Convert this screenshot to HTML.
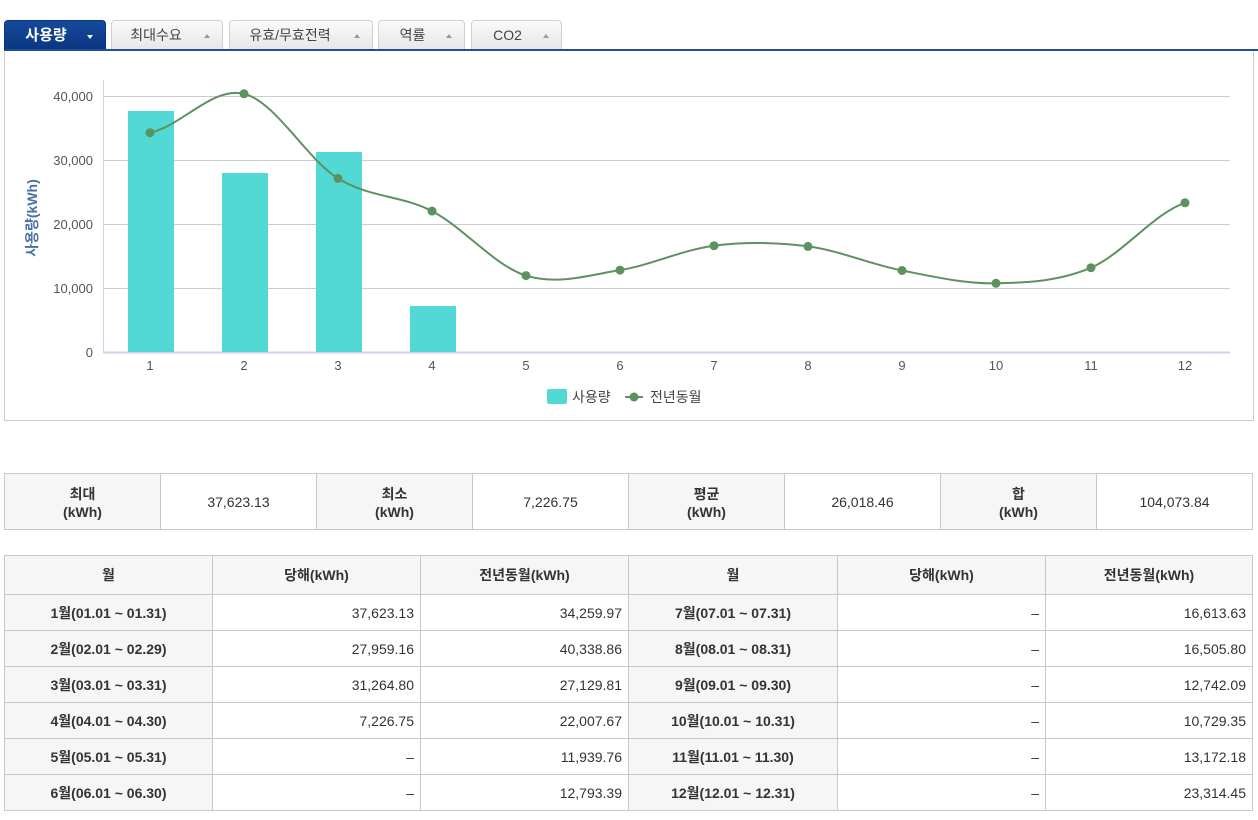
<!DOCTYPE html>
<html><head><meta charset="utf-8"><style>
body{margin:0;width:1258px;height:820px;background:#fff;font-family:"Liberation Sans","Noto Sans CJK KR",sans-serif;position:relative;overflow:hidden;color:#333}
.tab{position:absolute;top:20px;height:30px;box-sizing:border-box;border:1px solid #d0d0d0;border-bottom:none;border-radius:4px 4px 0 0;background:linear-gradient(#fafafa,#e6e6e6);font-size:14px;color:#444;line-height:29px}
.tab span.t{position:absolute;left:0;right:0;text-align:center}
.tab .a{position:absolute;right:12px;top:13px;width:0;height:0;border-left:3px solid transparent;border-right:3px solid transparent;border-bottom:4px solid #999}
.act{background:linear-gradient(#154a9c,#0a3680);border-color:#0a3680;color:#fff;font-weight:bold;font-size:15px}
.act .a{border-bottom:none;border-top:4px solid #fff;top:14px}
table{position:absolute;border-collapse:collapse;font-size:14px}
td{border:1px solid #c8c8c8;text-align:center;padding:0}
td.h{background:#f6f6f6;font-weight:bold;color:#333}
.m td{height:35px}
.m td.r{text-align:right;padding-right:6px}
.m tr:first-child td{height:38px}
</style></head><body>
<div class="tab act" style="left:4px;width:102px"><span class="t" style="right:18px">사용량</span><i class="a"></i></div>
<div class="tab" style="left:111px;width:112px"><span class="t" style="right:22px">최대수요</span><i class="a"></i></div>
<div class="tab" style="left:229px;width:144px"><span class="t" style="right:22px">유효/무효전력</span><i class="a"></i></div>
<div class="tab" style="left:378px;width:87px"><span class="t" style="right:18px">역률</span><i class="a"></i></div>
<div class="tab" style="left:471px;width:91px"><span class="t" style="right:18px">CO2</span><i class="a"></i></div>
<div style="position:absolute;left:4px;right:0;top:49px;height:2px;background:#1e4f9a"></div>
<div style="position:absolute;left:4px;top:52px;width:1250px;height:369px;box-sizing:border-box;border:1px solid #ccc;border-top:none"></div>
<svg style="position:absolute;left:0;top:0" width="1258" height="430" font-family="Liberation Sans,Noto Sans CJK KR,sans-serif">
<g stroke="#ccc" stroke-width="1">
<line x1="103" y1="96.5" x2="1230" y2="96.5"/><line x1="103" y1="160.5" x2="1230" y2="160.5"/><line x1="103" y1="224.5" x2="1230" y2="224.5"/><line x1="103" y1="288.5" x2="1230" y2="288.5"/>
</g>
<line x1="103.5" y1="80" x2="103.5" y2="352" stroke="#ccd6eb"/>
<line x1="103" y1="352.5" x2="1230" y2="352.5" stroke="#ccd6eb" stroke-width="2"/>
<g fill="#52d8d5">
<rect x="128" y="111" width="46" height="241"/><rect x="222" y="173" width="46" height="179"/><rect x="316" y="152" width="46" height="200"/><rect x="410" y="306" width="46" height="46"/>
</g>
<g font-size="13" fill="#555" text-anchor="end">
<text x="93" y="101">40,000</text><text x="93" y="165">30,000</text><text x="93" y="229">20,000</text><text x="93" y="293">10,000</text><text x="93" y="357">0</text>
</g>
<g font-size="13" fill="#555" text-anchor="middle">
<text x="150" y="370">1</text><text x="244" y="370">2</text><text x="338" y="370">3</text><text x="432" y="370">4</text><text x="526" y="370">5</text><text x="620" y="370">6</text><text x="714" y="370">7</text><text x="808" y="370">8</text><text x="902" y="370">9</text><text x="996" y="370">10</text><text x="1091" y="370">11</text><text x="1185" y="370">12</text>
</g>
<text transform="translate(37,218) rotate(-90)" font-size="14" font-weight="bold" fill="#4a6fa5" text-anchor="middle">사용량(kWh)</text>
<path fill="none" stroke="#5e9160" stroke-width="2" d="M150,132.7 C181.4,126.2 212.6,86.2 244,93.8 C275.4,101.4 306.6,158.9 338,178.4 C369.4,197.9 400.6,194.9 432,211.1 C463.4,227.3 494.6,265.8 526,275.6 C557.4,285.4 588.6,275.1 620,270.1 C651.4,265.1 682.6,249.7 714,245.7 C745.4,241.7 776.6,242.3 808,246.4 C839.4,250.5 870.6,264.4 902,270.5 C933.4,276.7 964.6,283.8 996,283.3 C1027.4,282.8 1059.6,281.1 1091,267.7 C1122.4,254.3 1153.6,213.6 1185,202.8"/>
<g fill="#5e9160">
<circle cx="150" cy="132.7" r="4.5"/><circle cx="244" cy="93.8" r="4.5"/><circle cx="338" cy="178.4" r="4.5"/><circle cx="432" cy="211.1" r="4.5"/><circle cx="526" cy="275.6" r="4.5"/><circle cx="620" cy="270.1" r="4.5"/><circle cx="714" cy="245.7" r="4.5"/><circle cx="808" cy="246.4" r="4.5"/><circle cx="902" cy="270.5" r="4.5"/><circle cx="996" cy="283.3" r="4.5"/><circle cx="1091" cy="267.7" r="4.5"/><circle cx="1185" cy="202.8" r="4.5"/>
</g>
<rect x="547" y="389" width="20" height="15" rx="2" fill="#52d8d5"/>
<text x="572" y="402" font-size="14" fill="#444">사용량</text>
<line x1="625" y1="397" x2="643" y2="397" stroke="#5e9160" stroke-width="2"/><circle cx="634" cy="397" r="4.5" fill="#5e9160"/>
<text x="650" y="402" font-size="14" fill="#444">전년동월</text>
</svg>
<table style="left:4px;top:473px;width:1249px">
<tr style="height:56px"><td class="h" style="width:155px">최대<br>(kWh)</td><td style="width:155px">37,623.13</td><td class="h" style="width:155px">최소<br>(kWh)</td><td style="width:155px">7,226.75</td><td class="h" style="width:155px">평균<br>(kWh)</td><td style="width:155px">26,018.46</td><td class="h" style="width:155px">합<br>(kWh)</td><td>104,073.84</td></tr>
</table>
<table class="m" style="left:4px;top:555px;width:1249px">
<tr><td class="h" style="width:207px">월</td><td class="h" style="width:207px">당해(kWh)</td><td class="h" style="width:207px">전년동월(kWh)</td><td class="h" style="width:208px">월</td><td class="h" style="width:207px">당해(kWh)</td><td class="h">전년동월(kWh)</td></tr>
<tr><td class="h">1월(01.01 ~ 01.31)</td><td class="r">37,623.13</td><td class="r">34,259.97</td><td class="h">7월(07.01 ~ 07.31)</td><td class="r">–</td><td class="r">16,613.63</td></tr>
<tr><td class="h">2월(02.01 ~ 02.29)</td><td class="r">27,959.16</td><td class="r">40,338.86</td><td class="h">8월(08.01 ~ 08.31)</td><td class="r">–</td><td class="r">16,505.80</td></tr>
<tr><td class="h">3월(03.01 ~ 03.31)</td><td class="r">31,264.80</td><td class="r">27,129.81</td><td class="h">9월(09.01 ~ 09.30)</td><td class="r">–</td><td class="r">12,742.09</td></tr>
<tr><td class="h">4월(04.01 ~ 04.30)</td><td class="r">7,226.75</td><td class="r">22,007.67</td><td class="h">10월(10.01 ~ 10.31)</td><td class="r">–</td><td class="r">10,729.35</td></tr>
<tr><td class="h">5월(05.01 ~ 05.31)</td><td class="r">–</td><td class="r">11,939.76</td><td class="h">11월(11.01 ~ 11.30)</td><td class="r">–</td><td class="r">13,172.18</td></tr>
<tr><td class="h">6월(06.01 ~ 06.30)</td><td class="r">–</td><td class="r">12,793.39</td><td class="h">12월(12.01 ~ 12.31)</td><td class="r">–</td><td class="r">23,314.45</td></tr>
</table>
</body></html>
